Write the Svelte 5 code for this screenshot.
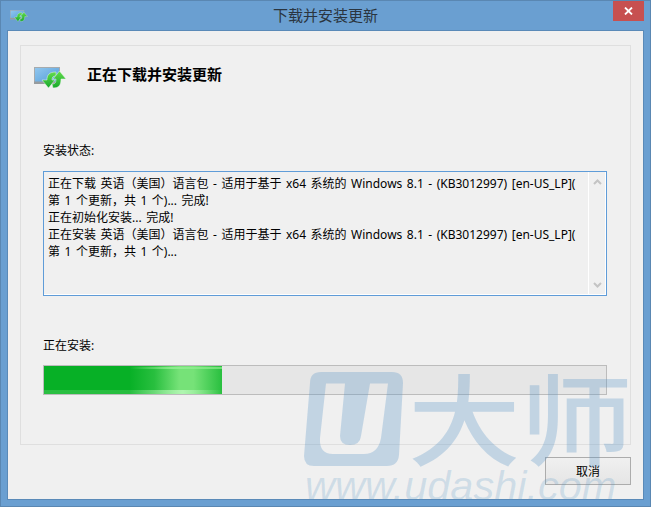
<script>
  const lines = [
    '正在下载 英语（美国）语言包 - 适用于基于 x64 系统的 Windows 8.1 - (KB3012997) [en-US_LP](',
    '第 1 个更新，共 1 个)... 完成!',
    '正在初始化安装... 完成!',
    '正在安装 英语（美国）语言包 - 适用于基于 x64 系统的 Windows 8.1 - (KB3012997) [en-US_LP](',
    '第 1 个更新，共 1 个)...'
  ];
</script>

{#snippet updateIcon(cls)}
  <svg class={cls} viewBox="0 0 33 22" aria-hidden="true">
    <defs>
      <linearGradient id="scr" x1="0" y1="0" x2="1" y2="1">
        <stop offset="0" stop-color="#93c8ef" />
        <stop offset="1" stop-color="#4f9ad8" />
      </linearGradient>
      <linearGradient id="grn" x1="0" y1="0" x2="0" y2="1">
        <stop offset="0" stop-color="#63dc4e" />
        <stop offset="1" stop-color="#16a82a" />
      </linearGradient>
    </defs>
    <rect x="0.5" y="0.5" width="25" height="16" fill="url(#scr)" stroke="#a6abae" />
    <rect x="0" y="14.500" width="26" height="2.500" fill="#979c9f" />
    <path d="M22 5C15 5 13 8 13 13H8l6.500 8L21 13h-3c0-3 1-4 4-4z" fill="url(#grn)" stroke="#e8f6e8" stroke-width=".5" />
    <path d="M19 21c6 0 8-3 8-9h5l-6.500-8L19 12h3c0 4-1 5-4 5z" fill="url(#grn)" stroke="#e8f6e8" stroke-width=".5" />
  </svg>
{/snippet}

<div class="window">
  <header class="titlebar">
    {@render updateIcon('icon-small')}
    <span class="title">下载并安装更新</span>
    <button class="close" aria-label="关闭">
      <svg viewBox="0 0 9 8" width="9" height="8"><path d="M1 0.500l7 7M8 0.500l-7 7" stroke="#fff" stroke-width="1.800" /></svg>
    </button>
  </header>

  <main class="client">
    <section class="panel">
      <div class="heading-row">
        {@render updateIcon('icon-large')}
        <h1>正在下载并安装更新</h1>
      </div>

      <p class="label status-label">安装状态:</p>
      <div class="log">
        <div class="log-text">
          {#each lines as line}
            <div>{line}</div>
          {/each}
        </div>
        <div class="scrollbar">
          <svg viewBox="0 0 9 6" width="9" height="6"><path d="M1 5l3.500-3.500L8 5" fill="none" stroke="#c4c4c4" stroke-width="2" /></svg>
          <svg viewBox="0 0 9 6" width="9" height="6"><path d="M1 1l3.500 3.500L8 1" fill="none" stroke="#c4c4c4" stroke-width="2" /></svg>
        </div>
      </div>

      <p class="label install-label">正在安装:</p>
      <div class="progress"><div class="fill"></div></div>
    </section>

    <footer class="actions">
      <button class="cancel">取消</button>
    </footer>
  </main>

  <div class="watermark" aria-hidden="true">
    <div class="wm-top">
      <svg class="wm-logo" viewBox="0 0 120 105">
        <path fill-rule="evenodd" d="M23 6H94Q105 6 105 17L101 89Q100 100 89 100H16Q6 100 6 90L12 17Q12 6 23 6ZM28 17.500H47L42 70Q42 79 52 79Q62 79 63 70L72 17.500H90L83 72Q80 88 66 88H35Q21 88 22 72Z" />
      </svg>
      <span class="wm-cjk">大师</span>
    </div>
    <div class="wm-url">www.udashi.com</div>
  </div>
</div>

<style>
  :global(body) {
    margin: 0;
    background: #6a9fd1;
  }
  .window {
    position: relative;
    width: 651px;
    height: 507px;
    box-sizing: border-box;
    display: flex;
    flex-direction: column;
    background: #6a9fd1;
    border: 1px solid #5a87b2;
    overflow: hidden;
    font-family: "Noto Sans", "Noto Sans CJK SC", sans-serif;
    color: #000;
    font-size: 12px;
  }
  .titlebar {
    position: relative;
    height: 29px;
    flex: none;
    display: flex;
    justify-content: center;
    align-items: flex-start;
  }
  .title {
    font-size: 15px;
    line-height: 28px;
    color: #2a3540;
  }
  .icon-small {
    position: absolute;
    left: 9px;
    top: 9px;
    width: 18px;
    height: 12px;
  }
  .close {
    position: absolute;
    top: 0;
    right: 6px;
    width: 31px;
    height: 20px;
    padding: 0;
    border: 0;
    background: #c75050;
    display: flex;
    align-items: center;
    justify-content: center;
  }
  .client {
    flex: 1;
    margin: 0 6px 6px 6px;
    padding: 14px 12px 0 12px;
    background: #f0f0f0;
    border: 1px solid #5a8ab8;
    display: flex;
    flex-direction: column;
    box-sizing: border-box;
  }
  .panel {
    height: 400px;
    box-sizing: border-box;
    border: 1px solid #dfdfdf;
    padding: 0 23px 0 22px;
    display: flex;
    flex-direction: column;
  }
  .heading-row {
    display: flex;
    align-items: flex-start;
    height: 59px;
    box-sizing: border-box;
    padding-top: 21px;
    margin-left: -9px;
  }
  .icon-large {
    width: 33px;
    height: 22px;
    flex: none;
  }
  h1 {
    margin: -4px 0 0 20px;
    font-size: 15px;
    font-weight: 700;
    line-height: 22px;
    color: #000;
  }
  .label {
    margin: 0;
    line-height: 18px;
    height: 18px;
  }
  .status-label {
    margin-top: 37px;
  }
  .log {
    margin-top: 11px;
    height: 125px;
    box-sizing: border-box;
    border: 1px solid #5f9cd8;
    display: flex;
    background: #f0f0f0;
    box-shadow: inset 0 -1px #fff, inset -1px 0 #fff;
  }
  .log-text {
    flex: 1;
    padding: 3px 0 0 4px;
    line-height: 17px;
    white-space: nowrap;
    overflow: hidden;
    word-spacing: 1.400px;
  }
  .scrollbar {
    width: 18px;
    flex: none;
    border-left: 1px solid #fff;
    display: flex;
    flex-direction: column;
    justify-content: space-between;
    align-items: center;
    padding: 7px 0;
    box-sizing: border-box;
  }
  .install-label {
    margin-top: 41px;
  }
  .progress {
    margin-top: 10px;
    height: 30px;
    box-sizing: border-box;
    border: 1px solid #bcbcbc;
    background: #e6e6e6;
  }
  .fill {
    width: 178px;
    height: 100%;
    background:
      linear-gradient(to right, transparent 48%, rgba(150, 240, 150, 0.8) 72%, rgba(140, 235, 140, 0.7) 100%) 0 1px / 100% 2px no-repeat,
      linear-gradient(to right, rgba(110, 220, 120, 0.35) 0, rgba(110, 220, 120, 0.3) 48%, rgba(190, 250, 190, 0.8) 78%, rgba(110, 220, 120, 0.3) 96%, transparent 100%) 0 100% / 100% 4px no-repeat,
      linear-gradient(to right, transparent 48%, rgba(118, 226, 120, 0.3) 62%, #76e278 76%, #76e278 84%, rgba(118, 226, 120, 0.3) 100%),
      #07b026;
  }
  .actions {
    display: flex;
    justify-content: flex-end;
    margin-top: 12px;
  }
  .cancel {
    width: 86px;
    height: 28px;
    padding: 0;
    box-sizing: border-box;
    border: 1px solid #acacac;
    background: linear-gradient(to bottom, #f0f0f0, #e5e5e5);
    font: inherit;
    font-size: 12px;
    color: #000;
  }
  .watermark {
    position: absolute;
    left: 297px;
    top: 365px;
    width: 340px;
    pointer-events: none;
    color: rgba(88, 150, 198, 0.3);
  }
  .wm-top {
    display: flex;
    align-items: center;
    height: 105px;
  }
  .wm-logo {
    width: 120px;
    height: 105px;
    fill: rgba(88, 150, 198, 0.3);
    flex: none;
  }
  .wm-cjk {
    margin-left: -10px;
    font-family: "Noto Sans CJK SC", sans-serif;
    font-weight: 500;
    font-size: 108px;
    line-height: 95px;
    white-space: nowrap;
    display: inline-block;
    transform-origin: left center;
    transform: translateY(-3px) scale(1.04, 0.92);
  }
  .wm-url {
    font-family: "Liberation Sans", sans-serif;
    font-style: italic;
    font-size: 41.500px;
    line-height: 41px;
    margin: -6px 0 0 7px;
    color: rgba(88, 150, 198, 0.22);
    white-space: nowrap;
  }
</style>
